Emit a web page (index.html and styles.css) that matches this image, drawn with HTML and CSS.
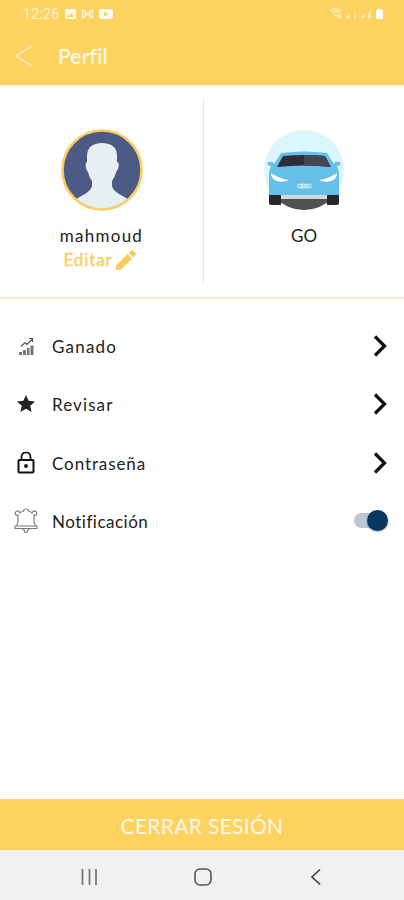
FILE: index.html
```html
<!DOCTYPE html>
<html lang="es">
<head>
  <meta charset="UTF-8" />
  <meta name="viewport" content="width=device-width, initial-scale=1.0" />
  <title>Perfil</title>
  <link rel="stylesheet" href="styles.css">
</head>
<body>
  <header class="header">
    <div class="status">
      <span class="time">12:26</span>
      <svg class="status-left" width="50" height="12" viewBox="0 0 50 12">
        <path fill="#fff8e4" fill-rule="evenodd" d="M2 1h9q1 0 1 1v8q0 1-1 1H2q-1 0-1-1V2q0-1 1-1zM3 9h7L7.500 5 5.500 7.500 4.500 6.500z"/>
        <path fill="none" stroke="#fff3d0" stroke-width="1.300" d="M18.500 10V2l5 4 5-4v8l-5-4zM21 2v8M26 2v8"/>
        <path fill="#fffdf5" fill-rule="evenodd" d="M37 1h9q3 0 3 3v4q0 3-3 3h-9q-2 0-2-3V4q0-3 2-3zM40 3.500v5L44.500 6z"/>
      </svg>
      <svg class="status-right" width="56" height="14" viewBox="0 0 56 14">
        <path fill="none" stroke="#fff0c4" stroke-width="1.300" d="M1 4q5-4 11 0M3 6q4-3 7 0M5 8q3-1 4 2l3-3M9 11l4-1"/>
        <path fill="#ffebb2" d="M21 7v4h-5zM27 3v8h-2zM36 6v5h-5zM42 2v9h-4z"/>
        <path fill="#fffefa" d="M47 3h1.500V2h4v1H54v9h-7z"/>
      </svg>
    </div>
    <div class="title-bar">
      <svg width="18" height="22" viewBox="0 0 18 22"><path fill="none" stroke="#fff0c8" stroke-width="1.400" d="M17 1L1 11l16 10"/></svg>
      <h1>Perfil</h1>
    </div>
  </header>

  <section class="cards">
    <div class="card user">
      <svg class="avatar" width="82" height="82" viewBox="0 0 82 82">
        <defs><clipPath id="face"><circle cx="41" cy="41" r="38.500"/></clipPath></defs>
        <circle cx="41" cy="41" r="39.500" fill="#4c5a85" stroke="#fbcb5d" stroke-width="2.600"/>
        <path clip-path="url(#face)" fill="#e6eff1" d="M41 14c10 0 15 5 15 13v6c3 0 2 7-1 10-1 5-3 7-4 9v5c1 6 10 9 17 14v15H14V71c7-5 16-8 17-14v-5c-2-3-3-5-4-9-3-3-3-10-1-10v-6c0-8 5-13 15-13z"/>
      </svg>
      <div class="name">mahmoud</div>
      <div class="edit">
        <span>Editar</span>
        <svg width="20" height="20" viewBox="0 0 20 20" fill="#fbcb5d"><path d="M0 20v-4.500L11.500 4 16 8.500 4.500 20zM12.700 2.800L15 .5q1-.8 2 0L19.500 3q.8 1 0 2l-2.300 2.300z"/></svg>
      </div>
    </div>
    <div class="card service">
      <svg class="car" width="82" height="82" viewBox="0 0 82 82">
        <defs><clipPath id="disc"><circle cx="41" cy="41" r="40"/></clipPath></defs>
        <circle cx="41" cy="41" r="40" fill="#dbf6ff"/>
        <path clip-path="url(#disc)" fill="#505052" d="M0 67h82v15H0z"/>
        <path fill="#29272a" d="M6 60h12v16H8q-2 0-2-2zM64 60h12v14q0 2-2 2H64z"/>
        <path fill="#d5d8db" d="M18 66h46v4H18z"/>
        <path fill="#66c1e9" d="M18 24q23-3 46 0l7 11 1-2h5q2 4-3 4l2 6v23H6V43l2-6q-5 0-3-4h5l1 2z"/>
        <path fill="#2d3137" d="M20 27q21-2 42 0l6 11q-27-3-54 0z"/>
        <path fill="#434850" d="M41 26q12 0 21 1l6 11q-12-1.500-27-1.500z"/>
        <path fill="#fff" d="M8 44q9 6 18 7-6 3-12 1-6-2-6-8zM74 44q-9 6-18 7 6 3 12 1 6-2 6-8z"/>
        <g fill="none" stroke="#e5f2f8" stroke-width="1"><ellipse cx="37" cy="57" rx="2.300" ry="2"/><ellipse cx="40" cy="57" rx="2.300" ry="2"/><ellipse cx="43" cy="57" rx="2.300" ry="2"/><ellipse cx="46" cy="57" rx="2.300" ry="2"/></g>
      </svg>
      <div class="name">GO</div>
    </div>
  </section>

  <main class="menu">
    <div class="row">
      <svg class="icon" width="24" height="24" viewBox="0 0 24 24"><path fill="#777" d="M5 18h3v3H5zM9 16h3v5H9zM13 14h2.500v7H13zM16.500 11.500h3V21h-3z"/><path fill="none" stroke="#555" stroke-width="1.200" d="M7 12.500l4-4 2 2 5-5M15 4.500h3.500V8"/></svg>
      <span class="label earned">Ganado</span>
      <svg class="arrow" width="16" height="24" viewBox="0 0 16 24"><path d="M2 2.500l9.500 9.500L2 21.500"/></svg>
    </div>
    <div class="row">
      <svg class="icon" width="24" height="24" viewBox="0 0 24 24"><path fill="#222" d="M12 3l2.600 5.800 6.400.700-4.800 4.200 1.400 6.300-5.600-3.300L6.400 20l1.400-6.300L3 9.500l6.400-.7z"/></svg>
      <span class="label review">Revisar</span>
      <svg class="arrow" width="16" height="24" viewBox="0 0 16 24"><path d="M2 2.500l9.500 9.500L2 21.500"/></svg>
    </div>
    <div class="row">
      <svg class="icon" width="24" height="24" viewBox="0 0 24 24"><rect x="4.500" y="9" width="15" height="12.500" rx="1" fill="none" stroke="#111" stroke-width="2"/><path fill="none" stroke="#111" stroke-width="1.700" d="M7.500 9V6q0-4.500 4.500-4.500T16.500 6v3"/><circle cx="12" cy="15" r="1.900" fill="#111"/></svg>
      <span class="label password">Contraseña</span>
      <svg class="arrow" width="16" height="24" viewBox="0 0 16 24"><path d="M2 2.500l9.500 9.500L2 21.500"/></svg>
    </div>
    <div class="row">
      <svg class="icon" width="24" height="26" viewBox="0 0 24 26"><path fill="none" stroke="#777" stroke-width="1.100" d="M9.500 3q0-2 2.500-2t2.500 2q2 .2 3.500 2 1-2.500 3-2 2.500 1 1.500 3.500-1 1.500-2.500.5V14l1.500 4H23v2.500H1V18h1.500L4 14V7Q2.500 8 1.500 6.500.500 4 3 3q2-.5 3 2 1.500-1.800 3.500-2zM2.500 18h19M8.500 20.500q0 1.500 1.700 1.500 0 2.500 1.800 2.500t1.800-2.500q1.700 0 1.700-1.500"/></svg>
      <span class="label notify">Notificación</span>
      <span class="toggle"><span class="knob"></span></span>
    </div>
  </main>

  <button class="logout">CERRAR SESIÓN</button>

  <nav class="nav">
    <svg width="18" height="18" viewBox="0 0 18 18"><path stroke="#737373" stroke-width="1.700" d="M2.500 1v16M9.500 1v16M16 1v16"/></svg>
    <svg width="18" height="18" viewBox="0 0 18 18"><rect x="1" y="1" width="16" height="16" rx="5" fill="none" stroke="#555" stroke-width="1.600"/></svg>
    <svg width="18" height="18" viewBox="0 0 18 18"><path fill="none" stroke="#444" stroke-width="1.700" d="M13 1.500L5 9l8 7.500"/></svg>
  </nav>
</body>
</html>
```
FILE: styles.css
```css
* {
  box-sizing: border-box;
}
body {
  margin: 0;
  height: 900px;
  display: flex;
  flex-direction: column;
  overflow: hidden;
  background: #fff;
  color: #222;
  font-family: Lato, "Open Sans", sans-serif;
}
svg {
  display: block;
  flex-shrink: 0;
}
.header {
  height: 85px;
  background: #fed261;
  border-bottom: 1px solid #f8cb58;
}
.status {
  display: flex;
  align-items: center;
  height: 27px;
  padding: 0 19px 0 23px;
  color: #fff2cf;
}
.time {
  width: 41px;
  font-family: Roboto, sans-serif;
  font-size: 14px;
  letter-spacing: 0.3px;
}
.status-right {
  margin-left: auto;
}
.title-bar {
  display: flex;
  align-items: center;
  gap: 25px;
  height: 57px;
  padding-left: 15px;
}
.title-bar h1 {
  margin: 0;
  color: #fff9e7;
  font-size: 21px;
  font-weight: 500;
  letter-spacing: 0.2px;
  -webkit-text-stroke: 0.2px #fff9e7;
}
.cards {
  display: flex;
  height: 214px;
  padding: 14px 0 13px;
  border-bottom: 2px solid #f8f1d0;
}
.card {
  display: flex;
  flex-direction: column;
  align-items: center;
  padding-top: 30px;
}
.user {
  width: 204px;
  border-right: 1px solid #f8e7b3;
}
.service {
  width: 200px;
}
.name {
  height: 24px;
  margin-top: 13px;
  line-height: 24px;
  font-size: 17px;
  letter-spacing: 1.25px;
}
.service .name {
  letter-spacing: 0;
}
.edit {
  display: flex;
  align-items: center;
  gap: 3px;
  height: 23px;
  margin-right: 4px;
  color: #fbcb5d;
  font-size: 17px;
  letter-spacing: 0.9px;
  -webkit-text-stroke: 0.3px #fbcb5d;
}
.menu {
  flex: 1;
  padding-top: 18px;
}
.row {
  display: flex;
  align-items: center;
  height: 58.3px;
  padding: 0 15px 0 14px;
}
.label {
  margin: 1px 0 0 14px;
  font-size: 17px;
}
.earned {
  letter-spacing: 1.2px;
}
.review {
  letter-spacing: 1.1px;
}
.password {
  letter-spacing: 0.9px;
}
.notify {
  margin-top: 0;
  letter-spacing: 0.5px;
}
.arrow {
  margin-left: auto;
  fill: none;
  stroke: #111;
  stroke-width: 3.3;
}
.toggle {
  display: flex;
  align-items: center;
  justify-content: flex-end;
  width: 34px;
  height: 15px;
  margin: -2px 1px 0 auto;
  border-radius: 8px;
  background: #b8c7d1;
}
.knob {
  flex-shrink: 0;
  width: 21px;
  height: 21px;
  border-radius: 50%;
  background: #083760;
  box-shadow: 0 1px 2px rgba(0, 0, 0, 0.3);
}
.logout {
  height: 51px;
  padding: 1px 0 0;
  border: 0;
  background: #fed261;
  color: #fff8e5;
  font-family: inherit;
  font-size: 21px;
  letter-spacing: 0.3px;
}
.nav {
  display: flex;
  align-items: center;
  justify-content: space-between;
  height: 50px;
  padding: 3px 79px 0 80px;
  background: #f1f1f1;
}
```
